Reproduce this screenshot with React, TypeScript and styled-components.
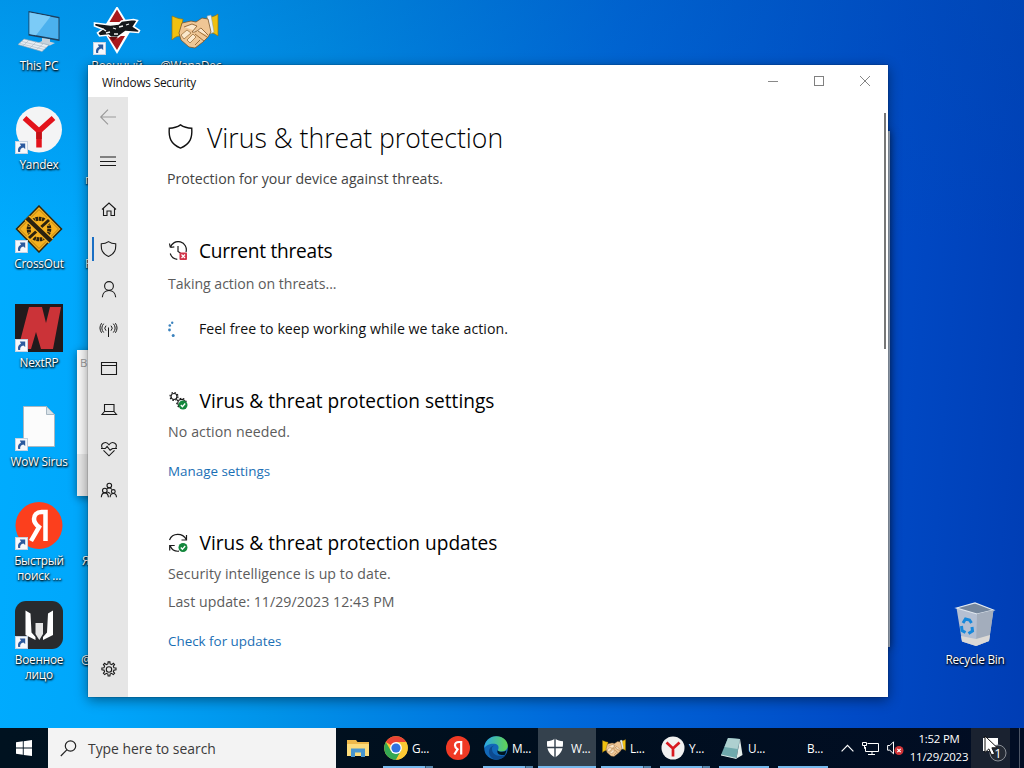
import React from 'react';
import styled, {createGlobalStyle, css} from 'styled-components';

const GlobalStyle = createGlobalStyle`
  * {
    box-sizing: border-box;
  }
  body {
    margin: 0;
    overflow: hidden;
    font-family: "Open Sans", "Noto Sans", sans-serif;
  }
`

const App = () => {
    return (
        <Screen>
            <GlobalStyle/>
            <Desktop>
                <IconColumn>
                    <DesktopIcon label={'This PC'} icon={<ThisPcArt/>}/>
                    <DesktopIcon label={'Yandex'} icon={<YandexArt/>} shortcut/>
                    <DesktopIcon label={'CrossOut'} icon={<CrossOutArt/>} shortcut/>
                    <DesktopIcon label={'NextRP'} icon={<NextRpArt/>} shortcut/>
                    <DesktopIcon label={'WoW Sirus'} icon={<FileArt/>} shortcut/>
                    <DesktopIcon label={'Быстрый поиск ...'} icon={<YaArt/>} shortcut/>
                    <DesktopIcon label={'Военное лицо'} icon={<WarFaceArt/>} shortcut/>
                </IconColumn>
                <IconColumn>
                    <DesktopIcon label={'Военный'} icon={<PlaneArt/>} shortcut/>
                    <Peek $indent={7} $line={2}>г</Peek>
                    <Peek $indent={7} $line={1}>F</Peek>
                    <Peek/>
                    <Peek/>
                    <Peek $indent={4} $line={1}>Я</Peek>
                    <Peek $indent={3} $line={1}>@</Peek>
                </IconColumn>
                <IconColumn>
                    <DesktopIcon label={'@WanaDec...'} icon={<HandshakeArt/>}/>
                </IconColumn>
            </Desktop>
            <BinPlace>
                <DesktopIcon label={'Recycle Bin'} icon={<BinArt/>}/>
            </BinPlace>
            <SmallWindow>
                <SmallWindowTitle>B</SmallWindowTitle>
                <SmallWindowFooter/>
            </SmallWindow>
            <BackWindow/>
            <SecurityWindow/>
            <Taskbar/>
            <Cursor width="16" height="22" viewBox="0 0 16 22">
                <path d="M1 1v16.5l3.9-3.6 2.7 6.2 3-1.3-2.7-6h5.4z" fill="#fff" stroke="#111" strokeWidth="1"/>
            </Cursor>
        </Screen>
    )
}

type DesktopIconProps = {
    label: string
    icon: React.ReactNode
    shortcut?: boolean
}

const DesktopIcon = ({label, icon, shortcut}: DesktopIconProps) => {
    return (
        <Cell>
            <Picture>
                {icon}
                {shortcut && <ShortcutArrow/>}
            </Picture>
            <Label>{label}</Label>
        </Cell>
    )
}

const ShortcutArrow = () => (
    <ArrowSvg width="13" height="13" viewBox="0 0 13 13">
        <rect x=".5" y=".5" width="12" height="12" fill="#f6f8fb" stroke="#c5d2e2"/>
        <path d="M3.200 11C2.500 8 3.500 5.600 6 4.800L4.800 2.600h5.400v5.300L8.400 6.400C6 7 4.800 8.500 5.200 11z" fill="#2c5a9e"/>
    </ArrowSvg>
)

const SecurityWindow = () => {
    return (
        <MainWindow>
            <TitleBar>
                <WindowName>Windows Security</WindowName>
                <Caption>
                    <svg width="10" height="10" viewBox="0 0 10 10"><path d="M0 5.500h10" stroke="#888"/></svg>
                </Caption>
                <Caption>
                    <svg width="10" height="10" viewBox="0 0 10 10">
                        <rect x=".5" y=".5" width="9" height="9" fill="none" stroke="#808080"/>
                    </svg>
                </Caption>
                <Caption>
                    <svg width="10" height="10" viewBox="0 0 10 10"><path d="M0 0l10 10M10 0L0 10" stroke="#777" strokeWidth=".9"/></svg>
                </Caption>
            </TitleBar>
            <WindowBody>
                <Sidebar>
                    <NavItem>
                        <Glyph $color={'#999'} viewBox="0 0 16 16"><path d="M16 8H.7M8 .7L.7 8 8 15.300"/></Glyph>
                    </NavItem>
                    <NavItem $gap={4}>
                        <Glyph viewBox="0 0 16 16"><path d="M0 4h16M0 8.500h16M0 12.500h16"/></Glyph>
                    </NavItem>
                    <NavItem $gap={8}>
                        <Glyph viewBox="0 0 16 16">
                            <path d="M2 8.500L9 2l7 6.500M3.500 7.300v7.200H7V10h4v4.500h3.500V7.300"/>
                        </Glyph>
                    </NavItem>
                    <NavItem $active>
                        <Glyph viewBox="-.5 0 16 16"><path d={shieldPath}/></Glyph>
                    </NavItem>
                    <NavItem>
                        <Glyph viewBox="0 0 16 16">
                            <circle cx="9" cy="5" r="4.400"/>
                            <path d="M2.300 16.200c.3-4 3-6.700 6.700-6.700s6.400 2.700 6.700 6.700"/>
                        </Glyph>
                    </NavItem>
                    <NavItem>
                        <Glyph viewBox="0 0 16 16">
                            <path d="M8.500 6.500V16M6 9.700a3.500 3.500 0 010-5M11 9.700a3.500 3.500 0 000-5M3.700 11.500a6.200 6.200 0 010-8.800M13.300 11.500a6.200 6.200 0 000-8.800M1.600 11.800a8.500 8.500 0 010-9.600M15.400 11.800a8.500 8.500 0 000-9.600" strokeWidth="1"/>
                        </Glyph>
                    </NavItem>
                    <NavItem>
                        <Glyph viewBox="0 0 16 16"><path d="M1.500 1.500h15v12h-15zM1.500 4.500h15"/></Glyph>
                    </NavItem>
                    <NavItem>
                        <Glyph viewBox="0 0 16 16">
                            <path d="M4.500 3.500h9.500v7H4.500zM4.500 10.500l-2.500 3h14.500l-2.500-3"/>
                        </Glyph>
                    </NavItem>
                    <NavItem>
                        <Glyph viewBox="0 0 16 16">
                            <path d="M2.200 7C0 2.300 6-.6 9 3.800 12-.6 18 2.300 15.800 7M3.500 9.300L9 14.800l5.500-5.500M1 7.500h4.300l1.800-2.200 3 4 2.400-1.800H17"/>
                        </Glyph>
                    </NavItem>
                    <NavItem>
                        <Glyph viewBox="-.5 -1.500 16 16">
                            <circle cx="8.800" cy="3" r="2.300"/>
                            <circle cx="4.300" cy="8" r="2.300"/>
                            <circle cx="12.800" cy="9" r="1.900"/>
                            <path d="M.8 14.700c.2-2.700 1.500-4.300 3.500-4.300s3.400 1.600 3.600 4.300M9.600 14.700c.2-2.300 1.300-3.700 3.200-3.700s3 1.400 3.200 3.700M6.500 6.200c1-.9 3.500-1.200 5 .8M6.800 9.500l3 1.500"/>
                        </Glyph>
                    </NavItem>
                    <Spacer/>
                    <NavItem>
                        <Glyph viewBox="-.5 -.5 16 16">
                            <path d={gearPath}/>
                            <circle cx="8.500" cy="8" r="2.700"/>
                        </Glyph>
                    </NavItem>
                </Sidebar>
                <Content>
                    <PageTitle>
                        <TitleShield viewBox="0 0 16 16"><path d={shieldPath}/></TitleShield>
                        Virus &amp; threat protection
                    </PageTitle>
                    <Lead>Protection for your device against threats.</Lead>

                    <Section>
                        <SectionTitle $track={-.25}>
                            <SectionIcon viewBox="0 0 20 20">
                                <path d="M2.300 6.500A8 8 0 1118 11M2.300 6.500L1.500 2.500M2.300 6.500l4-.6M2.300 12.500a8 8 0 007 5.800M10 5v5.500l2.500 1.500"/>
                                <rect x="11.500" y="11.500" width="7.500" height="7.500" rx="1" fill="#d13449" stroke="none"/>
                                <path d="M13.500 13.500l3.500 3.500M17 13.500L13.500 17" stroke="#fff"/>
                            </SectionIcon>
                            Current threats
                        </SectionTitle>
                        <Text $top={10} $track={-.05}>Taking action on threats...</Text>
                        <Progress>
                            <Spinner viewBox="0 0 16 16">
                                <circle cx="4.200" cy="1.700" r="1.200"/>
                                <circle cx="1.800" cy="4.500" r="1.300"/>
                                <circle cx="1.500" cy="9" r="1.400"/>
                                <circle cx="5.200" cy="14.500" r="1.500"/>
                            </Spinner>
                            Feel free to keep working while we take action.
                        </Progress>
                    </Section>

                    <Section>
                        <SectionTitle>
                            <SectionIcon viewBox="0 0 20 20">
                                <circle cx="6" cy="5.500" r="3"/>
                                <circle cx="6" cy="5.500" r="4" strokeDasharray="1.500 1.640"/>
                                <circle cx="13.500" cy="12" r="3.700"/>
                                <circle cx="13.500" cy="12" r="4.700" strokeDasharray="1.600 1.680"/>
                                <OkBadge cx={15} cy={14}/>
                            </SectionIcon>
                            Virus &amp; threat protection settings
                        </SectionTitle>
                        <Text $top={8} $track={.1}>No action needed.</Text>
                        <Link href="#">Manage settings</Link>
                    </Section>

                    <Section>
                        <SectionTitle>
                            <SectionIcon viewBox="0 0 20 20">
                                <path d="M1.500 7C4.500-.3 14.500-.3 18.300 6.500M18.500 2v5h-5M11 18.200c-4 .4-7.300-1.700-8.700-5.200M1.700 17.500v-5h5"/>
                                <OkBadge cx={15} cy={14.500}/>
                            </SectionIcon>
                            Virus &amp; threat protection updates
                        </SectionTitle>
                        <Text $top={8} $track={.07}>Security intelligence is up to date.</Text>
                        <Text $top={8} $track={.06}>Last update: 11/29/2023 12:43 PM</Text>
                        <Link href="#">Check for updates</Link>
                    </Section>
                </Content>
                <ScrollThumb/>
            </WindowBody>
        </MainWindow>
    )
}

const OkBadge = ({cx, cy}: { cx: number, cy: number }) => (
    <g transform={`translate(${cx} ${cy})`}>
        <circle r="4.500" fill="#13873c" stroke="none"/>
        <path d="M-2.200 0l1.600 1.700L2.200-1.500" stroke="#fff" strokeWidth="1.300"/>
    </g>
)

const Taskbar = () => {
    return (
        <Bar>
            <StartButton>
                <svg width="16" height="16" viewBox="0 0 16 16">
                    <path d="M0 2.300l6.800-1v6.300H0zM7.700 1.200L16 0v7.600H7.700zM0 8.500h6.800v6.300l-6.800-1zM7.700 8.500H16V16l-8.300-1.100z" fill="#fff"/>
                </svg>
            </StartButton>
            <Search>
                <svg width="17" height="17" viewBox="0 0 17 17" fill="none" stroke="#222" strokeWidth="1.200">
                    <circle cx="10.500" cy="6" r="5.200"/>
                    <path d="M6.800 9.800L.8 16"/>
                </svg>
                Type here to search
            </Search>
            <Apps>
                <App40><FolderArt/></App40>
                <Task $open $stack><ChromeArt/>G...</Task>
                <App40><YaRound/></App40>
                <Task $open $stack><EdgeArt/>M...</Task>
                <Task $open $active><DefenderArt/>W...</Task>
                <Task $open $stack><HandshakeArt small/>L...</Task>
                <Task $open $stack><YandexRound/>Y...</Task>
                <Task $open><NotepadArt/>U...</Task>
                <Task $open><EmptyIcon/>B...</Task>
            </Apps>
            <Tray>
                <svg width="13" height="8" viewBox="0 0 13 8"><path d="M.6 7.300L6.500 1.300l5.900 6" fill="none" stroke="#fff" strokeWidth="1.200"/></svg>
                <svg width="17" height="15" viewBox="0 0 17 15" fill="none" stroke="#fff">
                    <path d="M5.500 2.500h11v8H3.500V6M10 10.500v3M6 13.500h7M.5 1.500h4v3h-4zM2.500 4.500v3h1"/>
                </svg>
                <svg width="17" height="16" viewBox="0 0 17 16">
                    <path d="M.6 5.500h2.200L6.500 1.800v12L2.800 10.200H.6z" fill="none" stroke="#fff"/>
                    <circle cx="12" cy="10.500" r="4.500" fill="#d13438"/>
                    <path d="M10.300 8.800l3.400 3.400M13.700 8.800l-3.400 3.400" stroke="#fff" strokeWidth="1.200"/>
                </svg>
            </Tray>
            <Clock>
                <span>1:52 PM</span>
                <span>11/29/2023</span>
            </Clock>
            <Notifications>
                <svg width="28" height="30" viewBox="0 0 28 30">
                    <path d="M3 5h15v13h-5l-3 3v-3H3z" fill="#fff"/>
                    <circle cx="18" cy="20" r="8" fill="#252b35" stroke="#8a8f96"/>
                    <text x="18" y="24.800" textAnchor="middle" fontSize="13" fill="#fff">1</text>
                </svg>
            </Notifications>
            <ShowDesktop/>
        </Bar>
    )
}

/* ---- icon artwork ---- */

const shieldPath = 'M8 .6C6 2 3.500 2.700.8 2.700c-.4 6 .8 10 7.200 12.700 6.400-2.700 7.600-6.700 7.200-12.700C12.500 2.700 10 2 8 .6z'
const gearPath = 'M7.400 2.400L7.600.4h1.800l.2 2 1.600.7L12.800 1.800l1.300 1.300-1.300 1.600.6 1.500 2.100.2v1.900l-2 .3-.7 1.500 1.300 1.700-1.300 1.300-1.700-1.300-1.500.7-.2 2H7.600l-.2-2-1.600-.7-1.600 1.300-1.300-1.300 1.200-1.700-.6-1.500-2.100-.3V6.400l2.100-.2.6-1.500L2.900 3.100l1.300-1.300 1.600 1.300z'

const ThisPcArt = () => (
    <svg width="48" height="48" viewBox="0 0 48 48">
        <path d="M13.500 4l31 6v24l-31-5.500z" fill="#1d3f5e"/>
        <path d="M14.500 5.500l29 5.700v21l-29-5.200z" fill="#4bb1ee"/>
        <path d="M14.500 5.500l21 4L21 28.200l-6.500-1.200z" fill="#7bcbf7"/>
        <path d="M27 31l8 1.200v2.500l5 1.300-5 2.500-12-2.500 4-2z" fill="#c6d1da"/>
        <path d="M9 32l25 6-7 6.500-24-7z" fill="#e7edf2" stroke="#8fa4b4" strokeWidth=".6"/>
        <path d="M7 34.500l24 6M5 36.500l24 6M14 33l-6 6M21 35l-6 6M28 37l-7 6" stroke="#a7b6c2" strokeWidth=".6"/>
    </svg>
)

const YandexArt = () => (
    <svg width="48" height="48" viewBox="0 0 48 48">
        <circle cx="24" cy="23.500" r="23" fill="#f4f4f5"/>
        <path d="M9.500 12L24 25 38.500 12M24 24v17.500" fill="none" stroke="#e3131b" strokeWidth="5.500"/>
        <path d="M24 26v7" stroke="#c21016" strokeWidth="5.500"/>
    </svg>
)

const CrossOutArt = () => (
    <svg width="48" height="48" viewBox="0 0 48 48">
        <path d="M24 1l22.500 23L24 47 1.500 24z" fill="#f6b11f" stroke="#33270c" strokeWidth="1.500"/>
        <path d="M24 4.500L43.500 24 24 43.500 4.500 24z" fill="none" stroke="#a87812" strokeWidth=".8"/>
        <circle cx="24" cy="24" r="10.300" fill="none" stroke="#2b2210" strokeWidth="4" strokeDasharray="2.600 .6"/>
        <path d="M13 34l22-20" stroke="#f6b11f" strokeWidth="6"/>
        <path d="M14 33l20-18" stroke="#2b2210" strokeWidth="3"/>
        <path d="M12 13l24 23" stroke="#f6b11f" strokeWidth="7"/>
        <path d="M12 13l24 23" stroke="#2b2210" strokeWidth="4.500"/>
    </svg>
)

const NextRpArt = () => (
    <svg width="48" height="48" viewBox="0 0 48 48">
        <rect width="48" height="48" fill="#211a1c"/>
        <path d="M14 3h13l4 16 4-16h11l-8 42H26l-5-17-5 17H3z" fill="#cb3338"/>
    </svg>
)

const FileArt = () => (
    <svg width="48" height="48" viewBox="0 0 48 48">
        <path d="M8.500 3.500h23l8 8v32h-31z" fill="#fcfcfc" stroke="#a8b7c2"/>
        <path d="M31.500 3.500v8h8z" fill="#d9e2e8" stroke="#a8b7c2"/>
    </svg>
)

const YaArt = () => (
    <svg width="48" height="48" viewBox="0 0 48 48">
        <circle cx="24" cy="23.500" r="23.500" fill="#fc3f1d"/>
        <path d="M30.500 39V10h-4c-5 0-7.500 3-7.500 7 0 3.500 1.700 5.500 5 8L16 39" fill="none" stroke="#fff" strokeWidth="4.500"/>
    </svg>
)

const WarFaceArt = () => (
    <svg width="48" height="48" viewBox="0 0 48 48">
        <rect width="48" height="48" rx="11" fill="#292b2e"/>
        <path d="M10.500 9.500l5 3 1 19 4 4.500v3l-10-5zM38 9.500l-5 3-1 19-4 4.500v3l10-5z" fill="#fff"/>
        <path d="M20.500 22h7.500v11l-3.700 6-3.800-6z" fill="#e5e5e5"/>
    </svg>
)

const PlaneArt = () => (
    <svg width="48" height="48" viewBox="0 0 48 48">
        <path d="M24-1L38.500 22.500 24 47 9.500 22.500z" fill="#fff"/>
        <path d="M24 2.500l7.500 12.500h-15zM15 29h17L24 43z" fill="#a8191c"/>
        <path d="M1.500 16l16 2 8-1 3-3 12-1.500 4 1-4 6 6 4-1 2-13-1-8 6-7-.5-2-2-9 1-2-3 5-4-8-3z" fill="#15181b" stroke="#fff" strokeWidth="1.600"/>
        <path d="M10 22l3 2M13 26l4-1M20 21l3 1M26 20l4-1M21 27h4M33 18l3-1" stroke="#f2f2f2" strokeWidth="1.300"/>
        <path d="M16 30l4 4 5-4" fill="#6b1012"/>
    </svg>
)

const HandshakeArt = ({small}: { small?: boolean }) => (
    <svg width={small ? 24 : 48} height={small ? 24 : 48} viewBox="0 0 48 48">
        <path d="M1 9c7 3 9 3 11 3l-3 17c-3 0-5 1-8 4z" fill="#f0c010" stroke="#96720b" strokeWidth=".7"/>
        <path d="M47 7c-4 3-7 3-11 3l4 16c3 0 4 1 7 3z" fill="#f0c010" stroke="#96720b" strokeWidth=".7"/>
        <path d="M36 9l4-1 3 17-4 2z" fill="#eaf2f8" stroke="#8795a0" strokeWidth=".5"/>
        <path d="M11 16l9-2 5 1 6-4 6 1 3 13-3 5-5 5-8 6-6-1-8-7-2-7z" fill="#efc695" stroke="#7a562a" strokeWidth=".8"/>
        <path d="M13 20l8-3 5 2-5 6c4 1 7-3 9-4l7 7" fill="#fbe8cc" stroke="#8c6132" strokeWidth=".9"/>
        <path d="M10 28l6-5 4 3-7 6zM16 33l6-6 3 3-6 6z" fill="#fbe8cc" stroke="#94652f" strokeWidth=".7"/>
        <path d="M24 38l5-5M24 27l9 7M27 24l9 6" stroke="#94652f" strokeWidth=".9" fill="none"/>
    </svg>
)

const BinArt = () => (
    <svg width="48" height="48" viewBox="0 0 48 48">
        <path d="M5.500 7L24 2l18.500 7L38 40l-13 5-14-4.500z" fill="#c3cad4" opacity=".92"/>
        <path d="M5.500 7L24 2l18.500 7L26 13z" fill="#75869c" stroke="#e0e7ef" strokeWidth="1.200"/>
        <path d="M26 13l16.500-4L38 40l-13 5z" fill="#a3adbc"/>
        <path d="M10 35l15 3 14-4-1 6-13 5-14-4.500z" fill="#dcd9d6"/>
        <path d="M12 22l2.500-4 4 1 2 3M21 26l.5 4-4 2.500M14.500 31.500l-3.500-2-.5-4.500" fill="none" stroke="#1688db" strokeWidth="3"/>
    </svg>
)

const FolderArt = () => (
    <svg width="22" height="20" viewBox="0 0 22 20">
        <path d="M0 2h9l1.500 2H22v14H0z" fill="#eeb94b"/>
        <path d="M0 6h22v12H0z" fill="#fcdc7c"/>
        <path d="M4 19v-8.500h14V19h-4v-4.500H8V19z" fill="#4795cf"/>
    </svg>
)

const ChromeArt = () => (
    <svg width="24" height="24" viewBox="0 0 24 24">
        <circle cx="12" cy="12" r="11.800" fill="#fcc934"/>
        <path d="M12 12L1.800 6.100A11.800 11.800 0 0112 .2a11.800 11.800 0 0110.200 5.900L17 6.500z" fill="#ea4335"/>
        <path d="M1.800 6.100a11.800 11.800 0 0010.200 17.700l5-8.900-5-2.900-5 2.900z" fill="#34a853"/>
        <path d="M22.200 6.100H12v5.900l5 2.900-5 8.900a11.800 11.800 0 0010.200-17.700z" fill="#fcc934"/>
        <circle cx="12" cy="12" r="5.900" fill="#fff"/>
        <circle cx="12" cy="12" r="4.600" fill="#2f73e0"/>
    </svg>
)

const YaRound = () => (
    <svg width="24" height="24" viewBox="0 0 24 24">
        <circle cx="12" cy="12" r="12" fill="#f03a25"/>
        <path d="M15.200 18.500V6H13c-2.600 0-4 1.300-4 3.500 0 1.800 1 2.700 2.600 3.800L8.300 18.500" fill="none" stroke="#fff" strokeWidth="2.200"/>
    </svg>
)

const EdgeArt = () => (
    <svg width="24" height="24" viewBox="0 0 24 24">
        <defs>
            <linearGradient id="edgeTop" x1="0" x2="1">
                <stop offset="0" stopColor="#2aa7e8"/>
                <stop offset="1" stopColor="#63d552"/>
            </linearGradient>
        </defs>
        <circle cx="12" cy="12" r="11.800" fill="#1268b8"/>
        <path d="M.2 12C.5 5 6 .2 12.500.2 19 .2 24 5 23.800 10c-.2 3.500-3 5.500-6.500 5.500-2.500 0-3.600-.8-3.300-1.800 1.300-2 .6-5.700-3.500-6C6 7.300 1.500 9.500.2 12z" fill="url(#edgeTop)"/>
        <path d="M8 12c-.5 6 5 9.500 13.500 7.300-5 6.500-15 5.500-16.500-2.300-.5-4 2-7 5.500-7.500C9 10.200 8 11 8 12z" fill="#0c4a90"/>
        <path d="M13.500 14.200c2 2 6 2 9 .3l-1.500 4.300c-4 1-8.500-.5-7.500-4.600z" fill="#001522"/>
    </svg>
)

const DefenderArt = () => (
    <svg width="24" height="24" viewBox="0 0 24 24">
        <path d="M12 2.500C9.500 4.500 7 5 4 5.200c-.3 8 1.500 12.500 8 16.300 6.500-3.800 8.300-8.300 8-16.300-3-.2-5.500-.7-8-2.700z" fill="#fff"/>
        <path d="M12 2v20M3.500 11.500h17" stroke="#34414d" strokeWidth="1.400"/>
    </svg>
)

const YandexRound = () => (
    <svg width="24" height="24" viewBox="0 0 24 24">
        <circle cx="12" cy="12" r="11.500" fill="#f1f1f1"/>
        <path d="M5.500 6.500L12 12.500l6.500-6M12 12v8.500" fill="none" stroke="#d81920" strokeWidth="2.700"/>
    </svg>
)

const NotepadArt = () => (
    <svg width="24" height="24" viewBox="0 0 24 24">
        <path d="M8 2l12 1-3.500 19.500L1 19z" fill="#6fa9ad"/>
        <path d="M8 2l12 1-2.500 10L4.500 11z" fill="#aed0d0"/>
        <path d="M20 3l2.500 16-6 3.500z" fill="#e3edec"/>
        <path d="M1 19l15.500 3.500" stroke="#dcebea"/>
    </svg>
)

/* ---- desktop ---- */

const Screen = styled.div`
  position: relative;
  width: 1024px;
  height: 768px;
  overflow: hidden;
  display: flex;
  flex-direction: column;
  background:
    linear-gradient(180deg, rgba(0, 80, 170, .26) 0, rgba(0, 80, 170, 0) 240px),
    linear-gradient(94deg, #00adff 0%, #00a6fb 14%, #0093e9 30%, #0068da 58%, #004ac6 84%, #003db4 100%);
`
const Desktop = styled.div`
  flex: 1;
  display: flex;
`
const IconColumn = styled.div`
  width: 78px;
  display: flex;
  flex-direction: column;
`
const BinPlace = styled.div`
  position: absolute;
  left: 936px;
  top: 594px;
`
const Cell = styled.div`
  width: 78px;
  height: 99px;
  padding-top: 7px;
  display: flex;
  flex-direction: column;
  align-items: center;
`
const Picture = styled.div`
  position: relative;
  width: 48px;
  height: 48px;
`
const ArrowSvg = styled.svg`
  position: absolute;
  left: 0;
  bottom: 0;
`
const labelText = css`
  font-size: 11.8px;
  line-height: 15px;
  letter-spacing: -.22px;
  color: #fff;
  text-shadow: 1px 1px 2px #000, 0 1px 2px rgba(0, 0, 0, .9);
`
const Label = styled.span`
  ${labelText};
  width: 68px;
  margin-top: 3px;
  text-align: center;
  display: flex;
  justify-content: center;
`
const Peek = styled.span<{ $indent?: number, $line?: number }>`
  ${labelText};
  height: 99px;
  padding-top: ${({$line}) => $line === 2 ? 73 : 58}px;
  padding-left: ${({$indent}) => $indent || 0}px;
`

/* ---- windows ---- */

const SmallWindow = styled.div`
  position: absolute;
  left: 77px;
  top: 350px;
  width: 40px;
  height: 146px;
  display: flex;
  flex-direction: column;
  justify-content: space-between;
  background-color: #fbfbfb;
  box-shadow: 0 2px 8px rgba(0, 0, 0, .45);
`
const SmallWindowTitle = styled.span`
  padding: 5px 0 0 3px;
  font-size: 11.4px;
  color: #999;
`
const SmallWindowFooter = styled.div`
  height: 42px;
  background-color: #e9e9e9;
`
const BackWindow = styled.div`
  position: absolute;
  left: 600px;
  top: 131px;
  width: 290px;
  height: 516px;
  background-color: #a8b6c8;
  box-shadow: 0 1px 8px rgba(0, 0, 0, .5);
`
const MainWindow = styled.div`
  position: absolute;
  left: 88px;
  top: 65px;
  width: 800px;
  height: 632px;
  display: flex;
  flex-direction: column;
  background-color: #fff;
  box-shadow: 0 0 1px rgba(0, 0, 0, .6), 0 3px 12px rgba(0, 0, 0, .45);
`
const TitleBar = styled.div`
  height: 32px;
  display: flex;
  align-items: center;
`
const WindowName = styled.span`
  flex: 1;
  padding: 1px 0 0 14px;
  font-size: 11.8px;
  letter-spacing: -.2px;
  color: #111;
`
const Caption = styled.div`
  width: 46px;
  height: 32px;
  display: flex;
  justify-content: center;
  align-items: center;
`
const WindowBody = styled.div`
  flex: 1;
  display: flex;
`
const Sidebar = styled.nav`
  width: 40px;
  padding-bottom: 8px;
  display: flex;
  flex-direction: column;
  background-color: #e6e6e6;
`
const NavItem = styled.div<{ $active?: boolean, $gap?: number }>`
  height: 40px;
  margin-top: ${({$gap}) => $gap || 0}px;
  display: flex;
  align-items: center;
  padding-left: 12px;
  position: relative;
  ${({$active}) => $active && css`
    &::before {
      content: "";
      position: absolute;
      left: 4px;
      top: 8px;
      width: 2px;
      height: 24px;
      background-color: #1a6fc4;
    }
  `}
`
const Glyph = styled.svg<{ $color?: string }>`
  width: 16px;
  height: 16px;
  overflow: visible;
  fill: none;
  stroke: ${({$color}) => $color || '#1a1a1a'};
  stroke-width: 1.1;
`
const Spacer = styled.div`
  flex: 1;
`
const Content = styled.main`
  flex: 1;
  padding: 21px 0 0 40px;
`
const PageTitle = styled.h1`
  display: flex;
  align-items: center;
  gap: 14px;
  margin: 0;
  height: 40px;
  font-size: 26.6px;
  font-weight: 300;
  line-height: 40px;
  color: #000;
`
const TitleShield = styled.svg`
  width: 25px;
  height: 25px;
  margin-bottom: 3px;
  fill: none;
  stroke: #111;
  stroke-width: .9;
`
const bodyText = css`
  font-size: 14.15px;
  line-height: 20px;
`
const Lead = styled.p`
  ${bodyText};
  margin: 11px 0 0 -1px;
  color: #444;
`
const Section = styled.section`
  margin-top: 49px;
`
const SectionTitle = styled.h2<{ $track?: number }>`
  display: flex;
  align-items: center;
  gap: ${({$track}) => $track ? 11 : 11.5}px;
  margin: 0;
  height: 26px;
  font-size: 19.1px;
  font-weight: 400;
  line-height: 26px;
  letter-spacing: ${({$track}) => $track || 0}px;
  color: #000;
`
const SectionIcon = styled.svg`
  width: 20px;
  height: 20px;
  fill: none;
  stroke: #1a1a1a;
  stroke-width: 1.2;
`
const Text = styled.p<{ $top: number, $track?: number }>`
  ${bodyText};
  margin: ${({$top}) => $top}px 0 0;
  letter-spacing: ${({$track}) => $track || 0}px;
  color: #5c5c5c;
`
const Progress = styled.div`
  ${bodyText};
  display: flex;
  align-items: center;
  gap: 15px;
  margin-top: 25px;
  letter-spacing: .05px;
  color: #111;
`
const Spinner = styled.svg`
  width: 16px;
  height: 16px;
  fill: #3a82bd;
`
const Link = styled.a`
  display: block;
  margin-top: 19px;
  font-size: 13.4px;
  line-height: 20px;
  color: #1a6fb5;
  text-decoration: none;
`
const ScrollThumb = styled.div`
  width: 2px;
  height: 236px;
  margin: 16px 2px 0 0;
  background-color: #777;
`

/* ---- taskbar ---- */

const Bar = styled.footer`
  height: 40px;
  display: flex;
  background: linear-gradient(90deg, #001220, #000f1e 50%, #010d24);
  color: #fff;
  font-size: 11.8px;
`
const StartButton = styled.div`
  width: 48px;
  display: flex;
  justify-content: center;
  align-items: center;
`
const Search = styled.div`
  width: 288px;
  padding-left: 12px;
  display: flex;
  align-items: center;
  gap: 11px;
  background-color: #f3f3f3;
  color: #3a3a3a;
  font-size: 13.9px;
`
const Apps = styled.div`
  padding-left: 2px;
  display: flex;
  gap: 1px;
`
const App40 = styled.div`
  width: 40px;
  display: flex;
  justify-content: center;
  align-items: center;
`
const Task = styled.div<{ $open?: boolean, $stack?: boolean, $active?: boolean }>`
  width: 58px;
  padding-left: 5px;
  display: flex;
  align-items: center;
  gap: 4px;
  position: relative;
  white-space: nowrap;
  letter-spacing: -.2px;
  background-color: ${({$active}) => $active ? '#34414d' : 'transparent'};

  &::after {
    content: "";
    position: absolute;
    left: ${({$active}) => $active ? 0 : 4}px;
    right: ${({$active}) => $active ? 0 : 4}px;
    bottom: 0;
    height: 2px;
    background: ${({$stack}) => $stack
            ? 'linear-gradient(90deg, #76b9ed 42px, #35536d 42px, #35536d 43px, #5585ab 43px)'
            : '#76b9ed'};
  }
`
const EmptyIcon = styled.span`
  width: 24px;
`
const Tray = styled.div`
  flex: 1;
  display: flex;
  align-items: center;
  justify-content: flex-end;
  gap: 8px;
  padding-right: 4px;
`
const Clock = styled.div`
  width: 62px;
  display: flex;
  flex-direction: column;
  align-items: center;
  justify-content: center;
  font-size: 11.4px;
  line-height: 18px;
  letter-spacing: -.2px;
`
const Notifications = styled.div`
  width: 39px;
  margin-left: 1px;
  padding-left: 9px;
  display: flex;
  align-items: center;
  background-color: #1a2230;
`
const ShowDesktop = styled.div`
  width: 5px;
  margin-left: 9px;
  border-left: 1px solid #4d5666;
`
const Cursor = styled.svg`
  position: absolute;
  left: 984px;
  top: 735px;
`

export default App
